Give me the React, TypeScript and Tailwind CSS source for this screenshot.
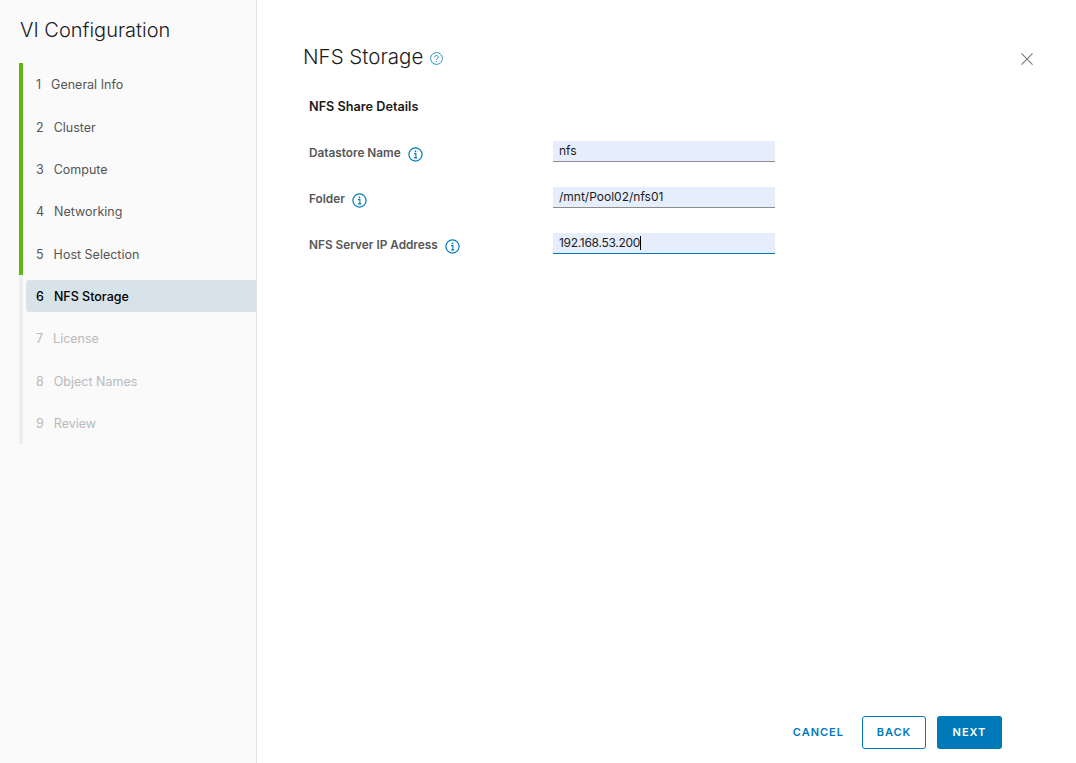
const steps = [
  { n: 1, label: 'General Info', state: 'done', gap: 'w-[10px]' },
  { n: 2, label: 'Cluster', state: 'done', gap: 'w-[10px]' },
  { n: 3, label: 'Compute', state: 'done', gap: 'w-[10px]' },
  { n: 4, label: 'Networking', state: 'done', gap: 'w-[10px]' },
  { n: 5, label: 'Host Selection', state: 'done', gap: 'w-[10px]' },
  { n: 6, label: 'NFS Storage', state: 'active', gap: 'w-[10px]' },
  { n: 7, label: 'License', state: 'todo', gap: 'w-[10px]' },
  { n: 8, label: 'Object Names', state: 'todo', gap: 'w-[10px]' },
  { n: 9, label: 'Review', state: 'todo', gap: 'w-[10px]' },
]

const fields = [
  { label: 'Datastore Name', value: 'nfs' },
  { label: 'Folder', value: '/mnt/Pool02/nfs01' },
  { label: 'NFS Server IP Address', value: '192.168.53.200', focused: true },
]

function InfoIcon() {
  return (
    <svg width="15" height="15" viewBox="0 0 15 15" fill="none" stroke="#0079b8" className="shrink-0">
      <circle cx="7.5" cy="7.5" r="6.6" strokeWidth="1.2" />
      <circle cx="7.5" cy="4.4" r="0.9" fill="#0079b8" stroke="none" />
      <path d="M6 6.6h1.9v4.2M5.9 10.9h3.3" strokeWidth="1.1" />
    </svg>
  )
}

function HelpIcon() {
  return (
    <svg width="13" height="13" viewBox="0 0 13 13" fill="none" stroke="#2f93c9" className="shrink-0">
      <circle cx="6.5" cy="6.5" r="5.9" strokeWidth="1" />
      <path d="M4.7 5.1c0-1 .8-1.7 1.8-1.7s1.8.7 1.8 1.6c0 1.4-1.8 1.4-1.8 2.8" strokeWidth="1" />
      <circle cx="6.5" cy="9.6" r="0.7" fill="#2f93c9" stroke="none" />
    </svg>
  )
}

function StepRow({ step }: { step: (typeof steps)[number] }) {
  const bar = step.state === 'done' ? 'border-[#60b515]' : 'border-[#eeeeee]'
  const tone =
    step.state === 'active'
      ? 'bg-[#d8e3e9] text-black font-medium rounded-l-[3px]'
      : step.state === 'done'
        ? 'text-[#565656]'
        : 'text-[#b9b9b9]'

  return (
    <li className={'h-[42.33px] flex items-center border-l-4 pl-[3px] ' + bar}>
      <div className={'h-8 w-full flex items-center pl-[10px] pt-[3px] text-[12.5px] ' + tone}>
        <span>{step.n}</span>
        <span className={step.gap + ' shrink-0'} />
        <span>{step.label}</span>
      </div>
    </li>
  )
}

export default function App() {
  return (
    <div className="h-screen w-full flex bg-white overflow-hidden font-['Inter','Liberation_Sans',sans-serif]">
      <aside className="w-[257px] shrink-0 bg-[#fafafa] border-r border-[#e3e3e3]">
        <h1 className="ml-[20px] mt-[17px] h-[26px] leading-[26px] text-[20px] font-light text-[#1b1b1b]">
          VI Configuration
        </h1>
        <ol className="ml-[19px] mt-[20px]">
          {steps.map((step) => (
            <StepRow key={step.n} step={step} />
          ))}
        </ol>
      </aside>

      <main className="flex-1 flex flex-col min-w-0 pl-[46px] pr-[74px] pb-[14px]">
        <header className="mt-[44px] h-[26px] flex items-center">
          <h2 className="text-[20.5px] leading-[26px] font-light text-[#1b1b1b]">NFS Storage</h2>
          <span className="ml-[7px] mt-[2px]">
            <HelpIcon />
          </span>
          <button className="ml-auto -mr-[31px] mt-[4px]" aria-label="Close">
            <svg width="12" height="12" viewBox="0 0 13 13" stroke="#747474" strokeWidth="1.1" className="block">
              <path d="M.5.5l12 12M12.5.5l-12 12" />
            </svg>
          </button>
        </header>

        <section className="pl-[6px]">
          <h3 className="mt-[29px] h-4 leading-4 text-[12.7px] font-semibold text-[#1b1b1b]">NFS Share Details</h3>
          <div className="mt-[26px] flex flex-col gap-[25px]">
            {fields.map((field) => (
              <div key={field.label} className="h-[21px] flex items-center">
                <label className="w-[244px] shrink-0 mt-[5px] flex items-center gap-[7px] text-[11.8px] font-semibold text-[#565656]">
                  {field.label}
                  <InfoIcon />
                </label>
                <div
                  className={
                    'w-[222px] h-[21px] bg-[#e6eefb] border-b pl-[6px] flex items-center text-[12px] text-[#1b1b1b] ' +
                    (field.focused ? 'border-[#0079b8] tracking-[-0.3px]' : 'border-[#8c8c8c]')
                  }
                >
                  <span>{field.value}</span>
                  {field.focused && <span className="w-px h-[14px] bg-black" />}
                </div>
              </div>
            ))}
          </div>
        </section>

        <footer className="mt-auto flex items-center justify-end text-[11px] font-semibold tracking-[1px]">
          <button className="mr-[18px] text-[#0079b8]">CANCEL</button>
          <button className="w-16 h-[33px] mr-[11px] rounded-[3px] border border-[#0079b8] bg-white text-[#0079b8]">
            BACK
          </button>
          <button className="w-[65px] h-[33px] rounded-[3px] bg-[#0079b8] text-white">NEXT</button>
        </footer>
      </main>
    </div>
  )
}
